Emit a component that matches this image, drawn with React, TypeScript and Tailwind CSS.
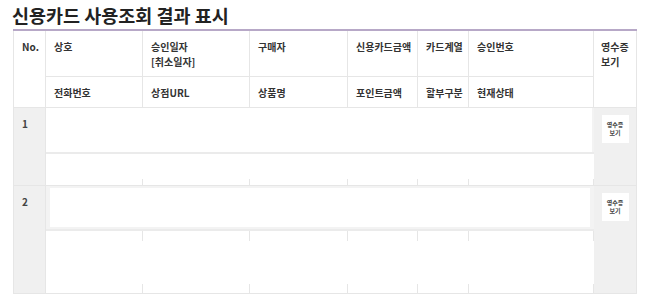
const head1 = ["상호", "승인일자\n[취소일자]", "구매자", "신용카드금액", "카드계열", "승인번호"];
const head2 = ["전화번호", "상점URL", "상품명", "포인트금액", "할부구분", "현재상태"];

function ReceiptButton() {
  return (
    <div className="mx-auto mt-[7px] flex h-[28px] w-[27px] flex-col items-center justify-center bg-white text-[6px] leading-[8px] text-[#444]">
      <span>영수증</span>
      <span>보기</span>
    </div>
  );
}

function SubCells({ top, bottom }: { top: number; bottom: number }) {
  return (
    <>
      {head2.map((_, i) => (
        <div key={i} className="border-r border-[#e6e6e6] bg-white">
          <div className="-mr-px bg-white" style={{ marginTop: top, height: `calc(100% - ${top + bottom}px)` }} />
        </div>
      ))}
    </>
  );
}

export default function App() {
  return (
    <div
      className="h-[304px] w-[649px] bg-white px-[13px] pt-[4px]"
      style={{ fontFamily: '"Noto Sans CJK KR", "Noto Sans", sans-serif' }}
    >
      <h1 className="-ml-px text-[18.5px] font-bold leading-[22px] text-[#222]">신용카드 사용조회 결과 표시</h1>
      <div className="mt-[3px] h-[2px] w-[624px] bg-[#b7a8c7]" />
      <div className="grid w-[624px] grid-cols-[32px_97px_107px_98px_70px_51px_125px_42px] border-x border-[#e6e6e6] text-[10px] font-bold leading-[15px] text-[#333]">
        {/* header */}
        <div className="row-span-2 border-r border-b border-[#e6e6e6] pl-[8px] pt-[8px]">No.</div>
        {head1.map((t) => (
          <div key={t} className="h-[46px] whitespace-pre-line border-r border-b border-[#e6e6e6] pl-[8px] pt-[8px]">
            {t}
          </div>
        ))}
        <div className="row-span-2 border-b border-[#e6e6e6] pl-[7px] pt-[8px]">
          영수증
          <br />
          보기
        </div>
        {head2.map((t) => (
          <div key={t} className="h-[31px] border-r border-b border-[#e6e6e6] pl-[8px] pt-[8px]">
            {t}
          </div>
        ))}

        {/* row 1 */}
        <div className="row-span-2 border-r border-b border-[#e6e6e6] bg-[#f0f0f0] pl-[8px] pt-[8px] font-semibold text-[#444]">1</div>
        <div className="col-span-6 h-[46px] border-b-2 border-[#ebebeb] bg-[#f3f3f3]">
          <div className="mr-[2px] h-full bg-white" />
        </div>
        <div className="row-span-2 border-b border-[#e6e6e6] bg-[#f0f0f0]">
          <ReceiptButton />
        </div>
        <div className="col-span-6 grid h-[32px] grid-cols-[97px_107px_98px_70px_51px_125px] border-b border-[#e6e6e6]">
          <SubCells top={0} bottom={6} />
        </div>

        {/* row 2 */}
        <div className="row-span-2 border-r border-b border-[#e6e6e6] bg-[#f0f0f0] pl-[8px] pt-[8px] font-semibold text-[#444]">2</div>
        <div className="col-span-6 h-[45px] border-b-2 border-[#ebebeb] bg-[#f3f3f3] px-[4px] py-[2px]">
          <div className="h-full bg-white" />
        </div>
        <div className="row-span-2 border-b border-[#e6e6e6] bg-[#f0f0f0]">
          <ReceiptButton />
        </div>
        <div className="col-span-6 grid h-[63px] grid-cols-[97px_107px_98px_70px_51px_125px] border-b border-[#e6e6e6]">
          <SubCells top={10} bottom={9} />
        </div>
      </div>
    </div>
  );
}
